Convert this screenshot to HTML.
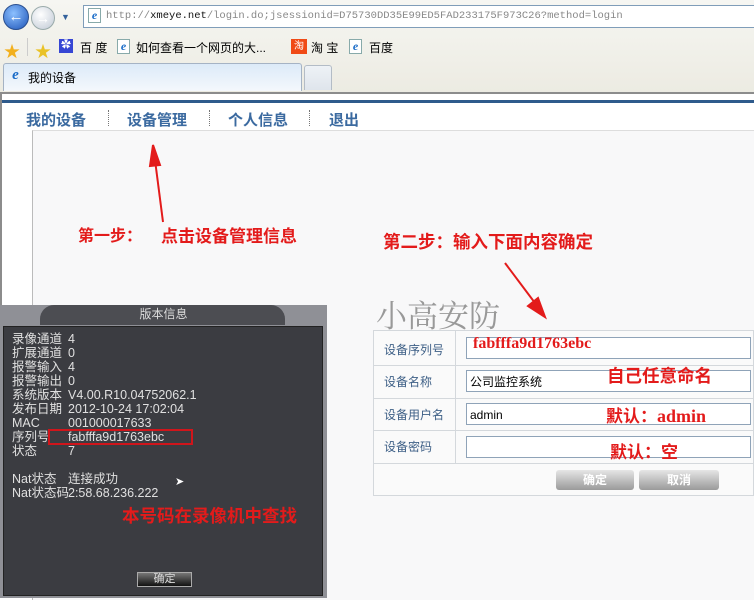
<!DOCTYPE html>
<html><head><meta charset="utf-8"><style>
*{margin:0;padding:0;box-sizing:border-box}
body{width:754px;height:598px;overflow:hidden;position:relative;background:#fff;font-family:"Liberation Sans","Noto Sans CJK SC",sans-serif;font-size:12px}
.a{position:absolute}
.red{color:#e31b1b;font-weight:bold;font-family:"Noto Sans CJK SC",sans-serif}
.ie{display:inline-block;width:13px;height:15px;border:1px solid #8aa;background:#fff;color:#1a6cc8;font:bold italic 12px "Liberation Serif",serif;text-align:center;line-height:13px}
.lbl{position:absolute;left:10px;color:#3d5f86;font-size:12px}
.inp{position:absolute;left:92px;width:285px;height:22px;border:1px solid #8fa3b8;background:#fff}
.dl{position:absolute;left:12px;color:#e0e0e0;font-size:12.5px;line-height:14px;white-space:nowrap}
.nav{position:absolute;top:109px;font-size:15px;font-weight:bold;color:#3b6aa0;white-space:nowrap;font-family:'Noto Sans CJK SC',sans-serif}
</style></head><body>
<div class="a" style="left:0;top:0;width:754px;height:93px;background:linear-gradient(#f6f6f2,#ecebe2)"></div>
<div class="a" style="left:3px;top:4px;width:26px;height:26px;border-radius:50%;background:radial-gradient(circle at 40% 35%,#8cc0ff,#1d54b8);border:1px solid #2a4f8f;color:#fff;font-weight:bold;text-align:center;line-height:24px;font-size:15px">←</div>
<div class="a" style="left:31px;top:6px;width:24px;height:24px;border-radius:50%;background:radial-gradient(circle at 40% 35%,#fff,#bfc8d4);border:1px solid #9aa;color:#fff;text-align:center;line-height:22px;font-size:14px">→</div>
<div class="a" style="left:61px;top:12px;color:#35629c;font-size:9px">▼</div>
<div class="a" style="left:83px;top:5px;width:680px;height:23px;border:1px solid #7f9db9;background:#fff"></div>
<div class="a" style="left:88px;top:8px"><span class="ie">e</span></div>
<div class="a" style="left:106px;top:10px;font-family:'Liberation Mono',monospace;font-size:10.5px;color:#888;white-space:nowrap">http://<span style="color:#111">xmeye.net</span>/login.do;jsessionid=D75730DD35E99ED5FAD233175F973C26?method=login</div>
<div class="a" style="left:4px;top:38px;color:#f2b01e;font-size:16px">★</div>
<div class="a" style="left:27px;top:38px;width:1px;height:18px;background:#ccc"></div>
<div class="a" style="left:35px;top:38px;color:#e9c227;font-size:16px">★</div>
<div class="a" style="left:59px;top:39px;width:14px;height:14px;background:#3646d4;color:#fff;font-size:10px;text-align:center;line-height:14px">✿</div>
<div class="a" style="left:80px;top:39px;font-size:12px;white-space:nowrap">百 度</div>
<div class="a" style="left:117px;top:39px"><span class="ie">e</span></div>
<div class="a" style="left:136px;top:39px;font-size:12px;white-space:nowrap">如何查看一个网页的大...</div>
<div class="a" style="left:291px;top:39px;width:16px;height:15px;background:#f04a16;color:#fff;font-size:10px;text-align:center;line-height:15px">淘</div>
<div class="a" style="left:311px;top:39px;font-size:12px">淘 宝</div>
<div class="a" style="left:349px;top:39px"><span class="ie">e</span></div>
<div class="a" style="left:369px;top:39px;font-size:12px">百度</div>
<div class="a" style="left:3px;top:63px;width:299px;height:28px;border:1px solid #a5b3c4;border-bottom:none;border-radius:3px 3px 0 0;background:linear-gradient(#dceaf8,#f4f8fc)"></div>
<div class="a" style="left:9px;top:68px"><span class="ie" style="border:none;background:none;font-size:15px">e</span></div>
<div class="a" style="left:28px;top:69px;font-size:12px">我的设备</div>
<div class="a" style="left:304px;top:65px;width:28px;height:25px;border:1px solid #b3bcc6;border-bottom:none;border-radius:3px 3px 0 0;background:linear-gradient(#eef2f6,#dfe5ec)"></div>
<div class="a" style="left:0;top:92px;width:754px;height:2px;background:#8c8c8c"></div>
<div class="a" style="left:0;top:94px;width:2px;height:504px;background:#8c8c8c"></div>
<div class="a" style="left:2px;top:100px;width:752px;height:3px;background:#2f5b8c"></div>
<div class="nav" style="left:26px">我的设备</div>
<div class="a" style="left:108px;top:110px;height:16px;border-left:1px dotted #777"></div>
<div class="nav" style="left:127px">设备管理</div>
<div class="a" style="left:209px;top:110px;height:16px;border-left:1px dotted #777"></div>
<div class="nav" style="left:228px">个人信息</div>
<div class="a" style="left:309px;top:110px;height:16px;border-left:1px dotted #777"></div>
<div class="nav" style="left:329px">退出</div>
<div class="a" style="left:32px;top:130px;width:722px;height:470px;background:#f8f8f9;border-left:1px solid #bbb;border-top:1px solid #ddd"></div>
<svg class="a" style="left:0;top:0" width="754" height="598">
<g stroke="#e31b1b" stroke-width="2" fill="#e31b1b">
<line x1="163" y1="222" x2="155" y2="160"/><polygon points="153,145 150,166 160,165"/>
<line x1="505" y1="263" x2="538" y2="307"/><polygon points="545,317 528,306 538,298"/>
<line x1="228" y1="490" x2="193" y2="458"/><polygon points="182,448 190,466 199,457"/>
<line x1="558" y1="381" x2="595" y2="381"/><polygon points="602,381 590,377 590,385"/>
<line x1="560" y1="420" x2="596" y2="420"/><polygon points="604,420 592,416 592,424"/>
<line x1="562" y1="452" x2="600" y2="452"/><polygon points="608,452 596,448 596,456"/>
</g></svg>
<div class="a red" style="left:78px;top:222px;font-size:16px;white-space:nowrap">第一步：</div>
<div class="a red" style="left:161px;top:222px;font-size:17px;white-space:nowrap">点击设备管理信息</div>
<div class="a red" style="left:383px;top:229px;font-size:17.5px;white-space:nowrap">第二步：输入下面内容确定</div>
<div class="a" style="left:376px;top:294px;font-size:31px;color:#999;font-family:'Noto Serif CJK SC',serif;line-height:40px">小高安防</div>
<div class="a" style="left:373px;top:330px;width:381px;height:166px;border:1px solid #d4d8dc;background:#fafafa">
 <div class="a" style="left:81px;top:0;width:1px;height:132px;background:#d4d8dc"></div>
 <div class="a" style="left:0;top:34px;width:381px;height:1px;background:#d4d8dc"></div>
 <div class="a" style="left:0;top:67px;width:381px;height:1px;background:#d4d8dc"></div>
 <div class="a" style="left:0;top:99px;width:381px;height:1px;background:#d4d8dc"></div>
 <div class="a" style="left:0;top:132px;width:381px;height:1px;background:#d4d8dc"></div>
 <div class="lbl" style="top:10px">设备序列号</div>
 <div class="lbl" style="top:42px">设备名称</div>
 <div class="lbl" style="top:75px">设备用户名</div>
 <div class="lbl" style="top:107px">设备密码</div>
 <div class="inp" style="top:6px"><span style="position:absolute;left:6px;top:-3px;color:#e31b1b;font:bold 16px 'Liberation Serif',serif">fabfffa9d1763ebc</span></div>
 <div class="inp" style="top:39px"><span style="position:absolute;left:3px;top:2px;font-size:12px;color:#000">公司监控系统</span></div>
 <div class="inp" style="top:72px"><span style="position:absolute;left:3px;top:4px;font-size:12px;color:#000">admin</span></div>
 <div class="inp" style="top:105px"></div>
 <div class="a" style="left:182px;top:139px;width:78px;height:20px;border-radius:3px;background:linear-gradient(#e6e6e6,#9a9a9a);color:#fff;font-weight:bold;text-align:center;line-height:20px">确定</div>
 <div class="a" style="left:265px;top:139px;width:80px;height:20px;border-radius:3px;background:linear-gradient(#e6e6e6,#9a9a9a);color:#fff;font-weight:bold;text-align:center;line-height:20px">取消</div>
</div>
<div class="a red" style="left:607px;top:363px;font-size:17.5px;white-space:nowrap">自己任意命名</div>
<div class="a red" style="left:606px;top:402px;font-size:17px;white-space:nowrap">默认：<span style="font-family:'Liberation Serif',serif;font-size:18px">admin</span></div>
<div class="a red" style="left:610px;top:438px;font-size:17px;white-space:nowrap">默认：空</div>
<div class="a" style="left:0;top:305px;width:327px;height:293px;background:#8f9096">
 <div class="a" style="left:40px;top:0;width:245px;height:20px;background:#4c4d52;border-radius:14px 14px 0 0"></div>
 <div class="a" style="left:0;top:0;width:327px;height:20px;color:#ddd;text-align:center;line-height:18px;font-size:12px">版本信息</div>
 <div class="a" style="left:3px;top:21px;width:320px;height:270px;background:#3b3c41;border:1px solid #222"></div>
 <div class="dl" style="top:27px">录像通道</div><div class="dl" style="left:68px;top:27px">4</div>
 <div class="dl" style="top:41px">扩展通道</div><div class="dl" style="left:68px;top:41px">0</div>
 <div class="dl" style="top:55px">报警输入</div><div class="dl" style="left:68px;top:55px">4</div>
 <div class="dl" style="top:69px">报警输出</div><div class="dl" style="left:68px;top:69px">0</div>
 <div class="dl" style="top:83px">系统版本</div><div class="dl" style="left:68px;top:83px">V4.00.R10.04752062.1</div>
 <div class="dl" style="top:97px">发布日期</div><div class="dl" style="left:68px;top:97px">2012-10-24 17:02:04</div>
 <div class="dl" style="top:111px">MAC</div><div class="dl" style="left:68px;top:111px">001000017633</div>
 <div class="dl" style="top:125px">序列号</div><div class="dl" style="left:68px;top:125px">fabfffa9d1763ebc</div>
 <div class="a" style="left:48px;top:124px;width:145px;height:16px;border:2px solid #d0151b"></div>
 <div class="dl" style="top:139px">状态</div><div class="dl" style="left:68px;top:139px">7</div>
 <div class="dl" style="top:167px">Nat状态</div><div class="dl" style="left:68px;top:167px">连接成功</div>
 <div class="dl" style="top:181px">Nat状态码</div><div class="dl" style="left:68px;top:181px">2:58.68.236.222</div>
 <div class="a" style="left:175px;top:170px;color:#fff;font-size:11px">➤</div>
 <div class="a" style="left:137px;top:267px;width:55px;height:15px;background:linear-gradient(#777,#111);border:1px solid #aaa;color:#ddd;font-size:11px;text-align:center;line-height:13px">确定</div>
</div>
<div class="a red" style="left:122px;top:503px;font-size:17.5px;white-space:nowrap">本号码在录像机中查找</div>
</body></html>
